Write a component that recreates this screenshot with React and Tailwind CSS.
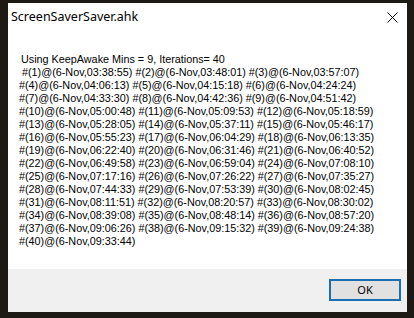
import React from 'react';

const lines = [
  ' #(1)@(6-Nov,03:38:55) #(2)@(6-Nov,03:48:01) #(3)@(6-Nov,03:57:07)',
  '#(4)@(6-Nov,04:06:13) #(5)@(6-Nov,04:15:18) #(6)@(6-Nov,04:24:24)',
  '#(7)@(6-Nov,04:33:30) #(8)@(6-Nov,04:42:36) #(9)@(6-Nov,04:51:42)',
  '#(10)@(6-Nov,05:00:48) #(11)@(6-Nov,05:09:53) #(12)@(6-Nov,05:18:59)',
  '#(13)@(6-Nov,05:28:05) #(14)@(6-Nov,05:37:11) #(15)@(6-Nov,05:46:17)',
  '#(16)@(6-Nov,05:55:23) #(17)@(6-Nov,06:04:29) #(18)@(6-Nov,06:13:35)',
  '#(19)@(6-Nov,06:22:40) #(20)@(6-Nov,06:31:46) #(21)@(6-Nov,06:40:52)',
  '#(22)@(6-Nov,06:49:58) #(23)@(6-Nov,06:59:04) #(24)@(6-Nov,07:08:10)',
  '#(25)@(6-Nov,07:17:16) #(26)@(6-Nov,07:26:22) #(27)@(6-Nov,07:35:27)',
  '#(28)@(6-Nov,07:44:33) #(29)@(6-Nov,07:53:39) #(30)@(6-Nov,08:02:45)',
  '#(31)@(6-Nov,08:11:51) #(32)@(6-Nov,08:20:57) #(33)@(6-Nov,08:30:02)',
  '#(34)@(6-Nov,08:39:08) #(35)@(6-Nov,08:48:14) #(36)@(6-Nov,08:57:20)',
  '#(37)@(6-Nov,09:06:26) #(38)@(6-Nov,09:15:32) #(39)@(6-Nov,09:24:38)',
  '#(40)@(6-Nov,09:33:44)',
];

const App = () => {
  return (
    <div className="w-[414px] h-[318px] bg-[#1d1915] pt-[3px] pl-[8px] pr-[7px] pb-[6px] font-['Liberation_Sans',Arial,sans-serif] text-black">
      <div className="h-full flex flex-col bg-white">
        {/* Title bar */}
        <div className="h-[29px] flex items-center justify-between pl-[3px] pr-[8px]">
          <span className="text-[12.5px] font-['Noto_Sans',sans-serif]">ScreenSaverSaver.ahk</span>
          <svg width="11" height="11" viewBox="0 0 11 11" className="mr-[1px]">
            <path d="M0.5 0.5 L10.5 10.5 M10.5 0.5 L0.5 10.5" stroke="#000" strokeWidth="1" />
          </svg>
        </div>

        {/* Message */}
        <div className="flex-1 pt-[21px] pl-[11px] text-[10.8px] leading-[13px] whitespace-pre">
          <div className="pl-[2px]">Using KeepAwake Mins = 9, Iterations= 40</div>
          {lines.map((line, i) => (
            <div key={i}>{line}</div>
          ))}
        </div>

        {/* Footer */}
        <div className="h-[43px] bg-[#f0f0f0] flex items-start justify-end pt-[10px] pr-[6px]">
          <button className="w-[72px] h-[22px] bg-[#e1e1e1] border-2 border-[#1a6fb3] text-[11px] font-['Noto_Sans',sans-serif] flex items-center justify-center">
            OK
          </button>
        </div>
      </div>
    </div>
  );
};

export default App;
